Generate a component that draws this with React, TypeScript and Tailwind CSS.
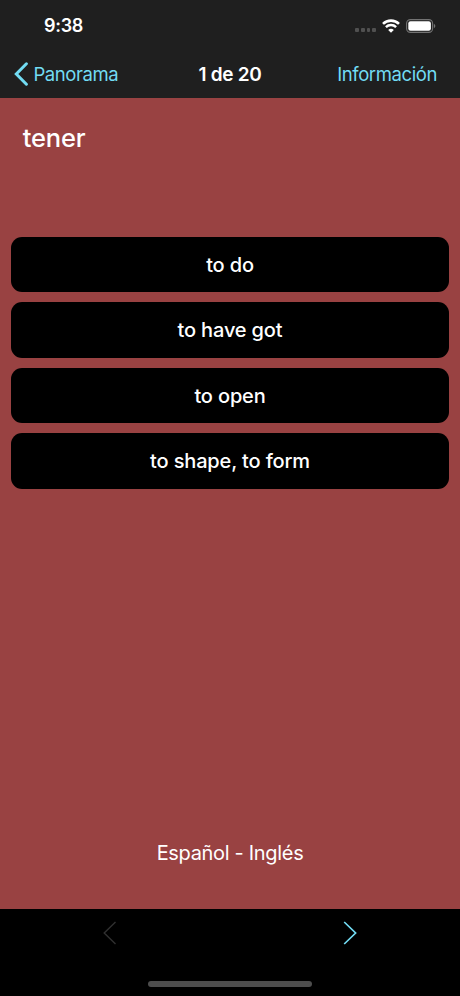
const ANSWERS = ['to do', 'to have got', 'to open', 'to shape, to form'];

function StatusBar() {
  return (
    <div className="h-[50px] pt-px pl-[44px] pr-6 flex items-center justify-between">
      <span className="text-[18px] leading-[26px] font-semibold tracking-[-0.3px]">9:38</span>
      <div className="flex items-center">
        {/* No signal */}
        <div className="flex gap-[2px] mr-[6px] mt-[9px]">
          <i className="w-[3.7px] h-[4px] rounded-[1px] bg-[#505050]" />
          <i className="w-[3.7px] h-[4px] rounded-[1px] bg-[#505050]" />
          <i className="w-[3.7px] h-[4px] rounded-[1px] bg-[#505050]" />
          <i className="w-[3.7px] h-[4px] rounded-[1px] bg-[#505050]" />
        </div>
        <svg width="18" height="14" viewBox="0 0 18 14" fill="none" className="mr-[6px]">
          <path d="M1 4.9a11.3 11.3 0 0 1 16 0" stroke="white" strokeWidth="2.6" />
          <path d="M3.9 8.1a7.2 7.2 0 0 1 10.2 0" stroke="white" strokeWidth="2.4" />
          <path d="M9 13.7 6.2 10.9a3.9 3.9 0 0 1 5.6 0Z" fill="white" />
        </svg>
        <svg width="30" height="14" viewBox="0 0 30 14" fill="none">
          <rect x="0.6" y="0.6" width="26" height="12.8" rx="3.8" stroke="#737373" strokeWidth="1.1" />
          <rect x="2.3" y="2.3" width="22.6" height="9.4" rx="2.2" fill="white" />
          <path d="M27.9 4.8c1.9.8 1.9 3.6 0 4.4Z" fill="#737373" />
        </svg>
      </div>
    </div>
  );
}

function NavBar() {
  return (
    <div className="h-12 px-[14px] grid grid-cols-[1fr_auto_1fr] items-center text-[18.5px] leading-6">
      <button type="button" className="flex items-center gap-[4.5px] text-[#72dcf3]">
        <svg width="15" height="24" viewBox="0 0 15 24" fill="none">
          <path d="M12.4 1.8 2.3 12l10.1 10.2" stroke="currentColor" strokeWidth="3" strokeLinecap="round" />
        </svg>
        <span className="tracking-[-0.45px]">Panorama</span>
      </button>
      <h1 className="pt-px text-[19px] font-semibold tracking-[-0.3px]">1 de 20</h1>
      <button type="button" className="mr-[9px] justify-self-end text-[#72dcf3] tracking-[-0.4px]">Información</button>
    </div>
  );
}

export default function App() {
  return (
    <div className="w-[460px] h-[996px] flex flex-col overflow-hidden bg-[#994242] text-white font-['Inter','Liberation_Sans',sans-serif]">
      <header className="h-[98px] shrink-0 bg-[#1f1f1f]">
        <StatusBar />
        <NavBar />
      </header>

      <main className="flex-1 flex flex-col px-[11.3px]">
        <h2 className="mt-[22px] ml-[11.5px] h-[117px] text-[25.5px] leading-9 font-medium tracking-[-0.2px]">tener</h2>
        <div className="flex flex-col gap-[10.2px]">
          {ANSWERS.map((answer) => (
            <button
              key={answer}
              type="button"
              className="h-[55.3px] rounded-[11px] bg-black text-center text-[20px] leading-6 font-medium tracking-[-0.15px]"
            >
              {answer}
            </button>
          ))}
        </div>
        <p className="mt-auto mb-[44px] text-center text-[20px] leading-6 tracking-[-0.32px]">Español - Inglés</p>
      </main>

      <footer className="h-[87px] shrink-0 bg-black flex flex-col items-center">
        <div className="w-full pt-[12px] pl-[103px] pr-[103px] flex justify-between">
          <svg width="14" height="24" viewBox="0 0 14 24" fill="none">
            <path d="M12.5 1 1.2 12l11.3 11" stroke="#303030" strokeWidth="1.4" />
          </svg>
          <svg width="14" height="24" viewBox="0 0 14 24" fill="none">
            <path d="M1.2 1 12.6 12 1.2 23" stroke="#72dcf3" strokeWidth="1.7" />
          </svg>
        </div>
        <div className="mt-auto mb-[9px] w-[164px] h-[6px] rounded-full bg-[#4d4d4d]" />
      </footer>
    </div>
  );
}
